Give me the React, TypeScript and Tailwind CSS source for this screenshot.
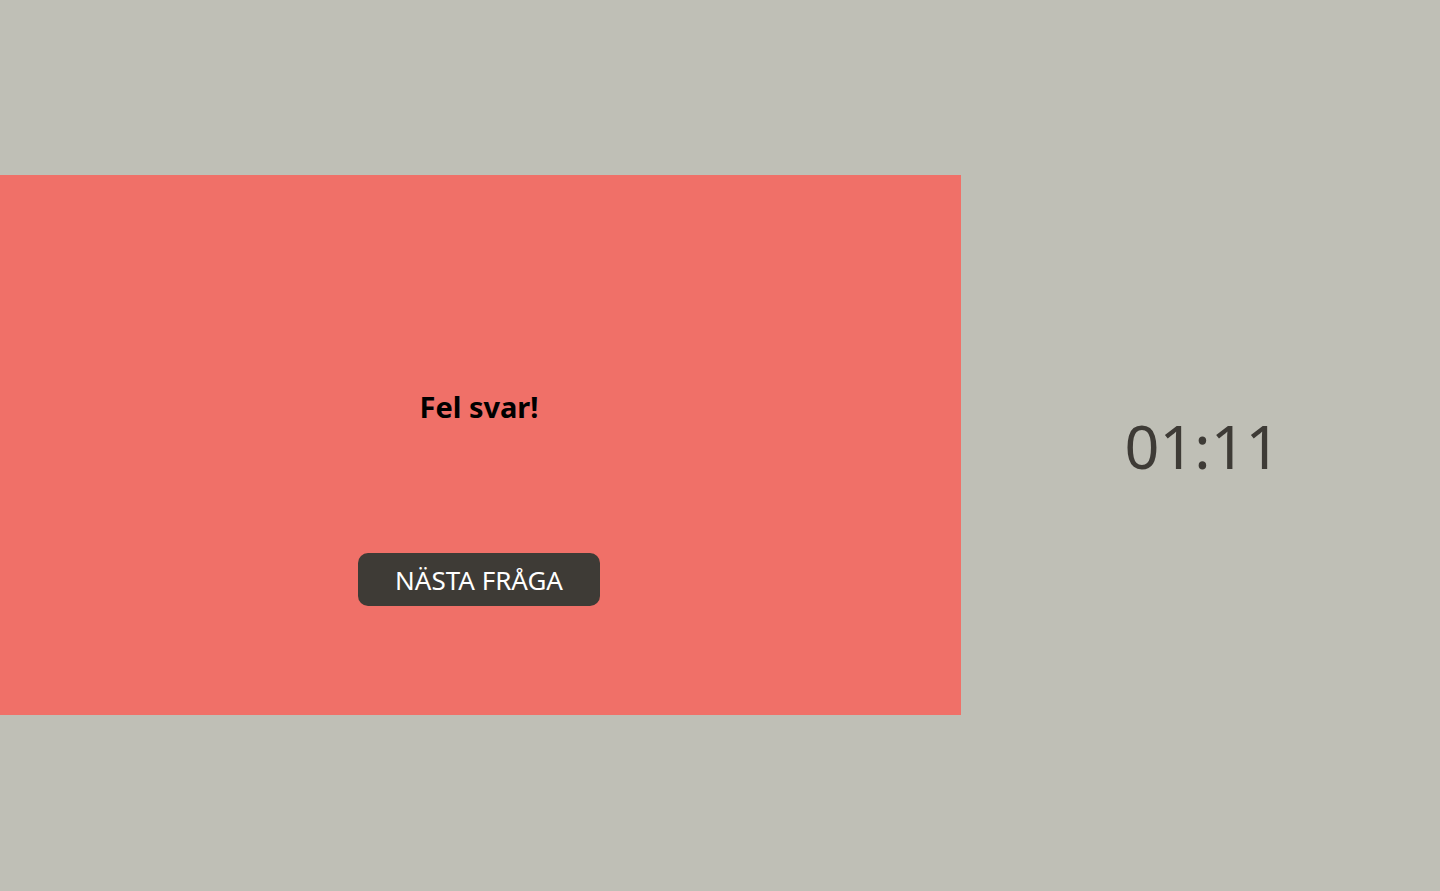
export default function App() {
  return (
    <div className="h-[891px] w-full bg-[#bfbfb6] pt-[175px] font-['Noto_Sans',sans-serif]">
      <div className="grid h-[540px] w-full grid-cols-[961px_1fr]">
        <section className="flex flex-col items-center bg-[#f07068] pr-[3px] pt-[213px]">
          <h1 className="text-[29px] font-bold leading-[38px] text-black">Fel svar!</h1>
          <button
            type="button"
            className="mt-[127px] h-[53px] w-[242px] rounded-[10px] bg-[#3e3b36] text-[26px] leading-none text-white"
          >
            NÄSTA FRÅGA
          </button>
        </section>
        <div className="flex items-center justify-center pl-[4px]">
          <span className="text-[61px] leading-none text-[#3e3b36]">01:11</span>
        </div>
      </div>
    </div>
  );
}
